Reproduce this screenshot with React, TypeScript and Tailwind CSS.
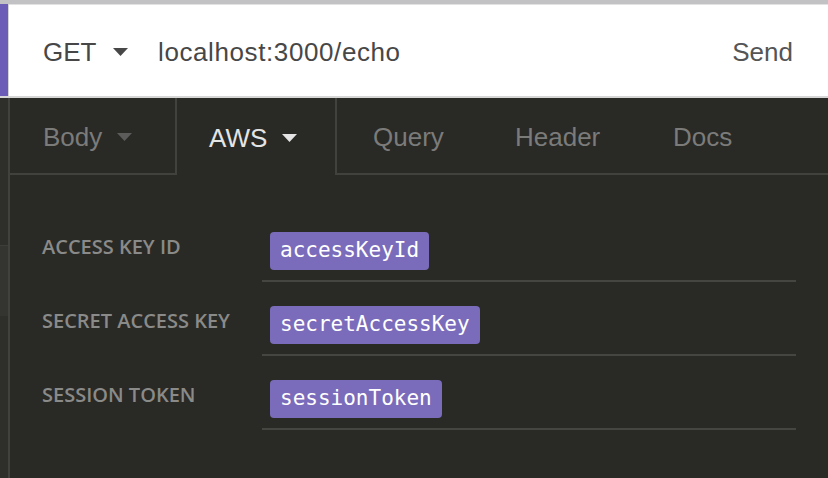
const tabs = [
  { label: "Body", width: "w-[165px] pl-[33px]", caret: true, active: false },
  { label: "AWS", width: "w-[162px] pl-[32px]", caret: true, active: true },
  { label: "Query", width: "w-[143px] pl-[36px]", caret: false, active: false },
  { label: "Header", width: "w-[157px] pl-[35px]", caret: false, active: false },
  { label: "Docs", width: "w-[130px] pl-[36px]", caret: false, active: false },
];

const fields = [
  { label: "ACCESS KEY ID", value: "accessKeyId" },
  { label: "SECRET ACCESS KEY", value: "secretAccessKey" },
  { label: "SESSION TOKEN", value: "sessionToken" },
];

function Caret({ className }: { className: string }) {
  return (
    <svg width="15" height="8" viewBox="0 0 15 8" className={className}>
      <path d="M0 0 L15 0 L7.5 8 Z" fill="currentColor" />
    </svg>
  );
}

export default function App() {
  return (
    <div className="w-[828px] h-[478px] overflow-hidden flex flex-col bg-[#292926] font-['Liberation_Sans',Arial,sans-serif]">
      <div className="h-[4px] bg-[#c2c2c4]" />

      {/* url bar */}
      <div className="flex h-[94px] border-b-2 border-[#d6d6d6]">
        <div className="w-[8px] bg-[#6b5cb8]" />
        <div className="w-[1px] bg-[#d4d4d4]" />
        <div className="flex-1 flex items-center pt-[4px] bg-white text-[26px] text-[#474747] border-t border-[#e2e2e2]">
          <span className="inline-block w-[70px] ml-[34px]">GET</span>
          <Caret className="text-[#474747] -mt-[2px]" />
          <span className="ml-[30px] tracking-[0.6px]">localhost:3000/echo</span>
          <span className="ml-auto mr-[35px] text-[#555]">Send</span>
        </div>
      </div>

      <div className="flex flex-1">
        {/* sidebar edge */}
        <div className="w-[8px] flex flex-col bg-[#2e2e2b]">
          <div className="h-[148px] border-b border-[#3d3d3a]" />
          <div className="h-[70px] bg-[#343431]" />
        </div>
        <div className="w-[2px] bg-[#41413e]" />

        <div className="flex-1 flex flex-col">
          {/* tabs */}
          <div className="flex h-[77px]">
            {tabs.map((tab) =>
              tab.active ? (
                <div
                  key={tab.label}
                  className={`${tab.width} flex items-center pt-[4px] border-x-2 border-[#41413e] text-[26px] text-[#e4e4e4]`}
                >
                  <span>{tab.label}</span>
                  <Caret className="ml-[15px] -mt-[2px] text-[#e4e4e4]" />
                </div>
              ) : (
                <div
                  key={tab.label}
                  className={`${tab.width} flex items-center pt-[4px] border-b-2 border-[#41413e] text-[26px] text-[#7b7b7a]`}
                >
                  <span>{tab.label}</span>
                  {tab.caret && <Caret className="ml-[15px] -mt-[2px] text-[#5c5c5a]" />}
                </div>
              )
            )}
            <div className="flex-1 border-b-2 border-[#41413e]" />
          </div>

          {/* aws fields */}
          <div className="flex flex-col pt-[33px] pl-[32px] pr-[32px]">
            {fields.map((f) => (
              <div key={f.label} className="flex pt-[24px]">
                <div className="w-[220px] pt-[3px] leading-[24px] text-[20px] font-semibold text-[#8a8a88] font-['Open_Sans',sans-serif]">
                  {f.label}
                </div>
                <div className="flex-1 pl-[8px] pb-[10px] border-b-2 border-[#454542]">
                  <span className="inline-flex items-center h-[38px] px-[10px] rounded-[4px] bg-[#7a6cbb] text-white text-[21px] font-['DejaVu_Sans_Mono',monospace]">
                    {f.value}
                  </span>
                </div>
              </div>
            ))}
          </div>
        </div>
      </div>
    </div>
  );
}
